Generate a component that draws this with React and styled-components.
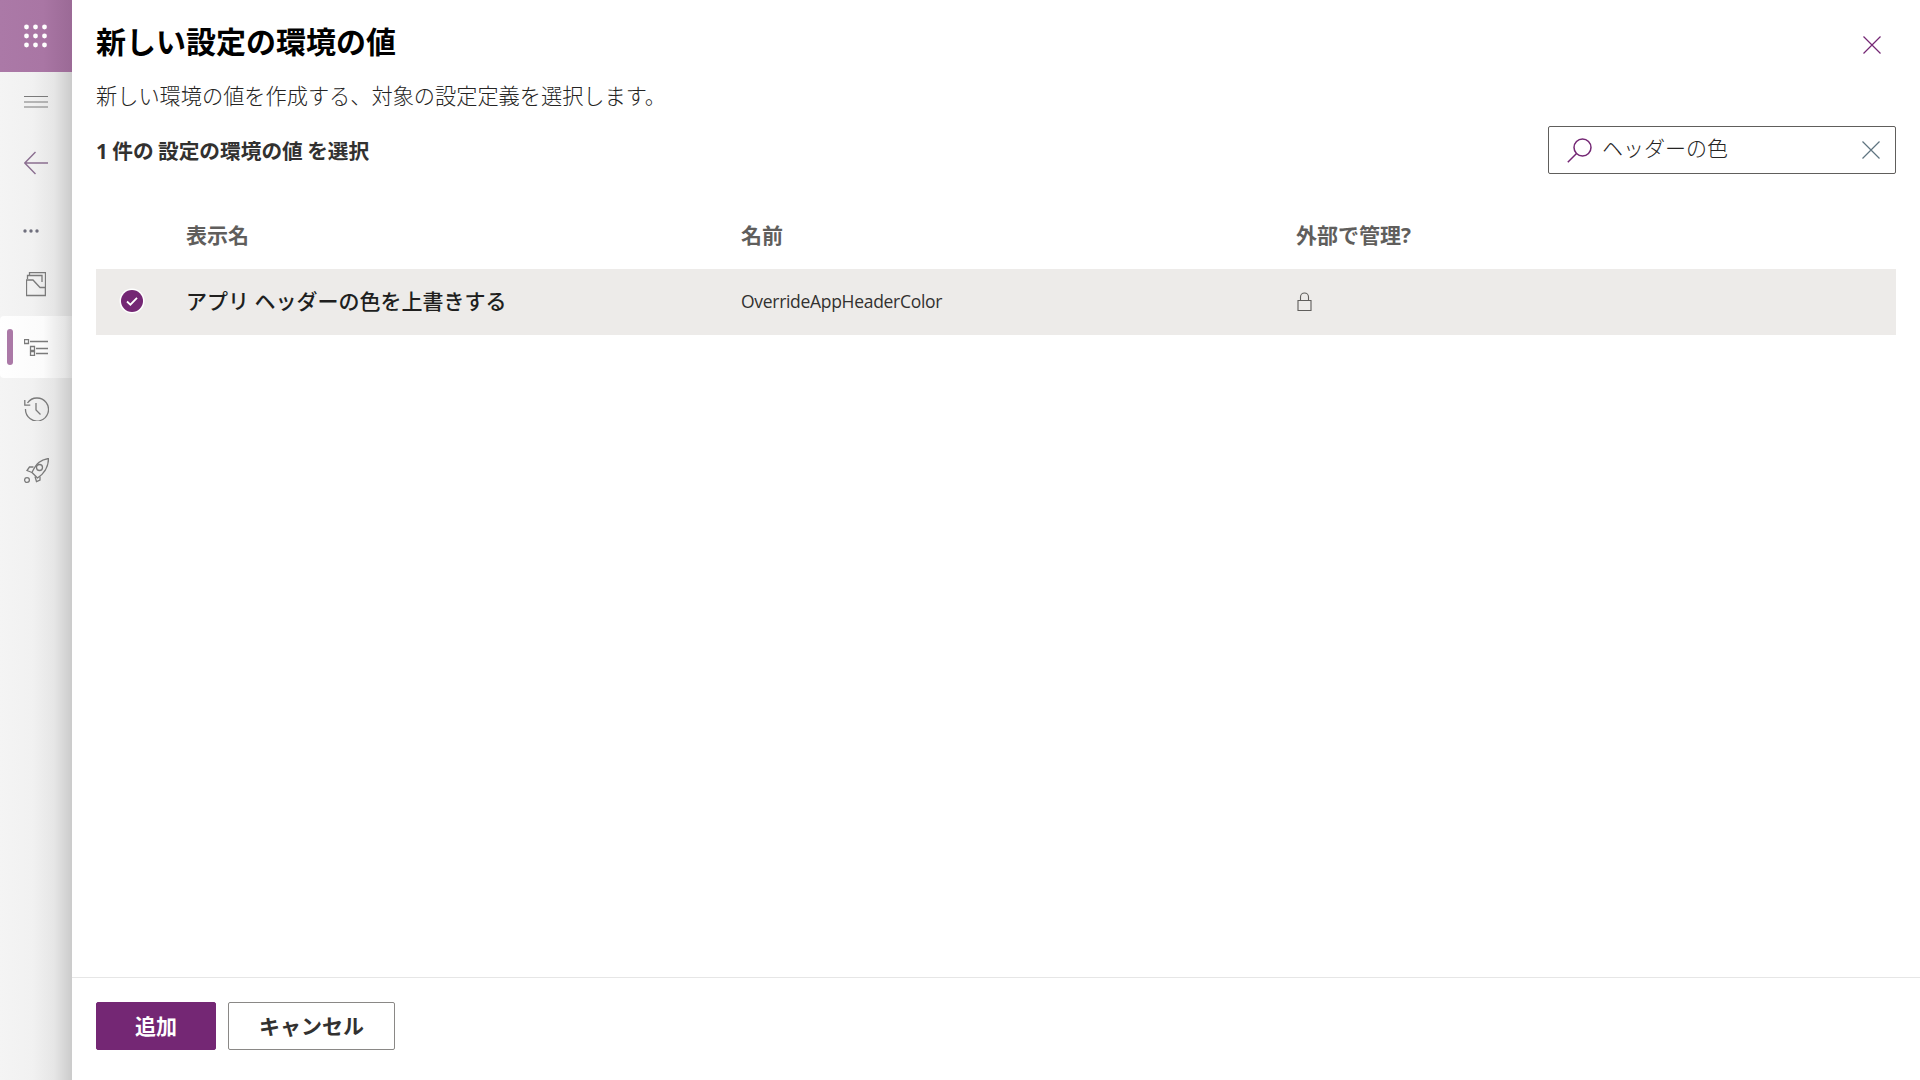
import React from "react";
import styled, { createGlobalStyle } from "styled-components";

const GlobalStyle = createGlobalStyle`
  html, body {
    margin: 0;
    height: 100%;
    background: #fff;
    font-family: "Open Sans", "Noto Sans CJK JP", sans-serif;
    overflow: hidden;
  }
  #root {
    height: 100%;
  }
`;

const Page = styled.div`
  display: flex;
  height: 1080px;
`;

const Sidebar = styled.nav`
  position: relative;
  width: 72px;
  flex: none;
  display: flex;
  flex-direction: column;
  background: linear-gradient(90deg, #f4f4f4 0%, #f1f1f1 45%, #e6e6e6 75%, #cbcbcb 100%);
`;

const AppTile = styled.div`
  height: 72px;
  display: flex;
  align-items: center;
  justify-content: center;
  background: linear-gradient(90deg, #ab79a7 0%, #a976a4 60%, #9b6a96 100%);
`;

const NavItem = styled.div`
  position: relative;
  box-sizing: border-box;
  height: ${(p) => p.$h || 62}px;
  display: flex;
  align-items: center;
  justify-content: ${(p) => (p.$left ? "flex-start" : "center")};
  padding-left: ${(p) => (p.$left ? "23px" : "0")};
  padding-top: ${(p) => (p.$left ? "15px" : "0")};
  background: ${(p) =>
    p.$active ? "linear-gradient(90deg, #ffffff 0%, #fbfbfb 60%, #e4e4e4 90%, #d4d4d4 100%)" : "transparent"};
  border-radius: ${(p) => (p.$active ? "4px 0 0 4px" : "0")};
`;

const ActiveBar = styled.span`
  position: absolute;
  left: 7px;
  top: 13px;
  width: 6px;
  height: 36px;
  border-radius: 3px;
  background: #ab79a7;
`;

const Main = styled.main`
  flex: 1;
  display: flex;
  flex-direction: column;
  min-width: 0;
`;

const Content = styled.div`
  flex: 1;
  padding: 24px 24px 0;
`;

const TitleRow = styled.div`
  display: flex;
  align-items: center;
  justify-content: space-between;
  height: 36px;
`;

const Title = styled.h1`
  margin: 0;
  font-size: 30px;
  line-height: 36px;
  font-weight: 700;
  color: #000;
`;

const CloseBtn = styled.span`
  display: flex;
  margin-right: 15px;
  margin-top: 6px;
`;

const Description = styled.p`
  margin: 22px 0 0;
  font-size: 21.2px;
  line-height: 28px;
  font-weight: 300;
  color: #252423;
`;

const Toolbar = styled.div`
  margin-top: 16px;
  height: 48px;
  display: flex;
  align-items: center;
  justify-content: space-between;
`;

const Count = styled.div`
  font-size: 20.7px;
  font-weight: 700;
  color: #323130;
  line-height: 28px;
  margin-top: 1px;
  word-spacing: -1px;
`;

const SearchBox = styled.div`
  box-sizing: border-box;
  width: 348px;
  height: 48px;
  display: flex;
  align-items: center;
  border: 1px solid #605e5c;
  border-radius: 2px;
  padding: 0 15px 0 18px;
  gap: 10px;
`;

const SearchText = styled.span`
  flex: 1;
  font-size: 21px;
  font-weight: 300;
  color: #252423;
  line-height: 28px;
  margin-top: -5px;
`;

const Columns = styled.div`
  display: grid;
  grid-template-columns: 90px 555px 555px 1fr;
  align-items: center;
`;

const HeadRow = styled(Columns)`
  margin-top: 36px;
  height: 59px;
`;

const HeadCell = styled.div`
  font-size: 21px;
  font-weight: 700;
  color: #605e5c;
  line-height: 28px;
  margin-bottom: 10px;
`;

const DataRow = styled(Columns)`
  box-sizing: border-box;
  height: 66px;
  padding-bottom: 2px;
  background: #edebe9;
`;

const CheckCell = styled.div`
  display: flex;
  justify-content: center;
  width: 72px;
`;

const RowTitle = styled.div`
  font-size: 21px;
  font-weight: 500;
  color: #201f1e;
  line-height: 28px;
`;

const RowName = styled.div`
  font-size: 17.5px;
  font-weight: 400;
  color: #323130;
  line-height: 28px;
  letter-spacing: -0.3px;
`;

const LockCell = styled.div`
  display: flex;
  padding-left: 1px;
`;

const Footer = styled.footer`
  height: 103px;
  box-sizing: border-box;
  border-top: 1px solid #e6e6e6;
  display: flex;
  align-items: flex-start;
  gap: 12px;
  padding: 24px;
`;

const Button = styled.button`
  box-sizing: border-box;
  height: 48px;
  width: ${(p) => p.$w}px;
  border-radius: 2px;
  border: 1px solid ${(p) => (p.$primary ? "#742774" : "#8a8886")};
  background: ${(p) => (p.$primary ? "#742774" : "#fff")};
  color: ${(p) => (p.$primary ? "#fff" : "#323130")};
  font-family: inherit;
  font-size: 21px;
  font-weight: 700;
  padding: 0 0 2px;
`;

const GridIcon = () => (
  <svg width="28" height="28" viewBox="0 0 28 28" fill="#fff">
    {[4.5, 13.5, 22.5].map((y) =>
      [4.5, 13.5, 22.5].map((x) => <circle key={`${x}-${y}`} cx={x} cy={y + 0.5} r="2.4" />)
    )}
  </svg>
);

const Line = ({ children, w = 24, h = 24, color = "#7a7a7a", sw = 1.3 }) => (
  <svg width={w} height={h} viewBox={`0 0 ${w} ${h}`} fill="none" stroke={color} strokeWidth={sw}>
    {children}
  </svg>
);

const X = ({ color }) => (
  <Line w={18} h={18} color={color} sw={1.2}>
    <path d="M.5.5l17 17M17.5.5l-17 17" />
  </Line>
);

export default function App() {
  return (
    <Page>
      <GlobalStyle />
      <Sidebar>
        <AppTile>
          <GridIcon />
        </AppTile>
        <NavItem $h={60}>
          <Line h={14} sw={1.2}>
            <path d="M0 1.5h24M0 7h24M0 12h24" />
          </Line>
        </NavItem>
        <NavItem $h={62}>
          <Line h={24} color="#8b6f90" sw={1.4}>
            <path d="M24 12H1M11.5 1L.8 12l10.7 11" />
          </Line>
        </NavItem>
        <NavItem $h={59} $left>
          <svg width="16" height="4" viewBox="0 0 16 4" fill="#6f6f7d">
            <circle cx="2" cy="2" r="1.7" />
            <circle cx="8" cy="2" r="1.7" />
            <circle cx="14" cy="2" r="1.7" />
          </svg>
        </NavItem>
        <NavItem $h={63}>
          <Line w={20} h={25}>
            <path d="M3.5 3V.5h16V24M1.5 7V3.5H16V10" />
            <path d="M.5 8H7l7 7.5h5.5v8H.5z" />
          </Line>
        </NavItem>
        <NavItem $active>
          <ActiveBar />
          <Line h={17}>
            <path d="M.5.5h4v4h-4zM6 2.5h18M6.5 7.5h4v4h-4zM12 9.5h12M6.5 12.5h4v4h-4zM12 14.5h12" />
          </Line>
        </NavItem>
        <NavItem>
          <Line w={25} h={24}>
            <path d="M3.5 6A11.5 11.5 0 1 1 1.5 12" />
            <path d="M.8 3v5.2h5.5M12 6v7l4.5 4.5" />
          </Line>
        </NavItem>
        <NavItem>
          <Line w={25} h={26}>
            <path d="M24.5.5C17 1.5 12.5 5 8 14.5l5.5 5.5C21 15 24.5 9 24.5.5z" />
            <circle cx="15.5" cy="9.5" r="3" />
            <path d="M9.5 9H5.5L3 12.5l5 2M16 18.5V22l-3.5 1.5-1.5-5" />
            <circle cx="3" cy="22" r="2.4" />
          </Line>
        </NavItem>
      </Sidebar>
      <Main>
        <Content>
          <TitleRow>
            <Title>新しい設定の環境の値</Title>
            <CloseBtn>
              <X color="#742774" />
            </CloseBtn>
          </TitleRow>
          <Description>新しい環境の値を作成する、対象の設定定義を選択します。</Description>
          <Toolbar>
            <Count>1 件の 設定の環境の値 を選択</Count>
            <SearchBox>
              <Line w={25} h={25} color="#742774" sw={1.5}>
                <circle cx="15.5" cy="9.5" r="8.5" />
                <path d="M9.5 15.5L.8 24.2" />
              </Line>
              <SearchText>ヘッダーの色</SearchText>
              <X color="#5f7480" />
            </SearchBox>
          </Toolbar>
          <HeadRow>
            <span />
            <HeadCell>表示名</HeadCell>
            <HeadCell>名前</HeadCell>
            <HeadCell>外部で管理?</HeadCell>
          </HeadRow>
          <DataRow>
            <CheckCell>
              <svg width="26" height="26" viewBox="0 0 26 26">
                <circle cx="13" cy="13" r="12.5" fill="#fff" />
                <circle cx="13" cy="13" r="11" fill="#742774" />
                <path d="M8 13.5l3.4 3.2L18 9.8" fill="none" stroke="#fff" strokeWidth="1.8" />
              </svg>
            </CheckCell>
            <RowTitle>アプリ ヘッダーの色を上書きする</RowTitle>
            <RowName>OverrideAppHeaderColor</RowName>
            <LockCell>
              <Line w={15} h={19} color="#605e5c" sw={1.1}>
                <path d="M1 8.5h13v10H1zM3.5 8.5V5a4 4 0 0 1 8 0v3.5" />
              </Line>
            </LockCell>
          </DataRow>
        </Content>
        <Footer>
          <Button $primary $w={120}>追加</Button>
          <Button $w={167}>キャンセル</Button>
        </Footer>
      </Main>
    </Page>
  );
}
